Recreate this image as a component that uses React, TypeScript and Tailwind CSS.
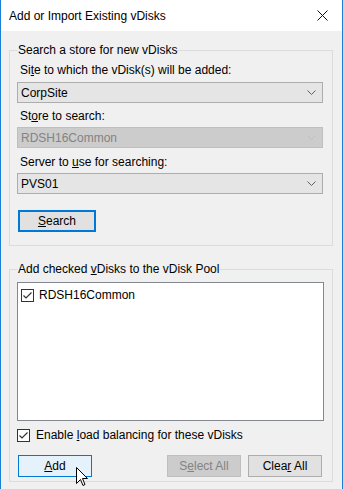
import { ReactNode } from 'react';

const font = { fontFamily: '"Liberation Sans", Arial, sans-serif' };

const Chevron = ({ disabled }: { disabled?: boolean }) => (
    <svg width="9" height="5" viewBox="0 0 9 5" className="shrink-0">
        <path d="M0.5 0.5 L4.5 4.5 L8.5 0.5" fill="none" stroke={disabled ? '#bfbfbf' : '#606060'} strokeWidth="1" />
    </svg>
);

const Combo = ({ value, disabled }: { value: string; disabled?: boolean }) => (
    <div
        className={`h-[21px] flex items-center justify-between pl-[3px] pr-[6px] border ${
            disabled ? 'bg-[#cccccc] border-[#bfbfbf] text-[#838383]' : 'bg-[#e5e5e5] border-[#adadad] text-black'
        }`}
    >
        <span>{value}</span>
        <Chevron disabled={disabled} />
    </div>
);

const CheckBox = () => (
    <div className="w-[13px] h-[13px] border border-[#333333] bg-white flex items-center justify-center shrink-0">
        <svg width="11" height="11" viewBox="0 0 11 11">
            <path d="M1.5 5.5 L4 8 L9.5 2.5" fill="none" stroke="#333333" strokeWidth="1.2" />
        </svg>
    </div>
);

const Btn = ({ children, kind, w }: { children: ReactNode; kind: 'normal' | 'focus' | 'hover' | 'disabled'; w: string }) => {
    const styles = {
        normal: 'bg-[#e1e1e1] border border-[#adadad] text-black',
        focus: 'bg-[#e1e1e1] border-2 border-[#0078d7] text-black',
        hover: 'bg-[#e5f1fb] border border-[#0078d7] text-black',
        disabled: 'bg-[#cccccc] border border-[#bfbfbf] text-[#838383]',
    };
    return <div className={`${w} h-[22px] flex items-center justify-center ${styles[kind]}`}>{children}</div>;
};

const Label = ({ children }: { children: ReactNode }) => <div className="h-4 pl-[3px]">{children}</div>;

export default function App() {
    return (
        <div className="w-[343px] h-[489px] bg-[#f0f0f0] border-x border-[#1c7fd6] text-[12px] leading-4 text-black relative overflow-hidden" style={font}>
            {/* title bar */}
            <div className="h-[31px] bg-white flex items-center justify-between pl-[8px] pr-[14px]">
                <span className="text-[12px]">Add or Import Existing vDisks</span>
                <svg width="11" height="11" viewBox="0 0 11 11">
                    <path d="M0.5 0.5 L10.5 10.5 M10.5 0.5 L0.5 10.5" stroke="#111" strokeWidth="1" />
                </svg>
            </div>

            <div className="pl-[8px] pr-[9px] pt-[11px]">
                <fieldset className="border border-[#dcdcdc] pl-[7px] pr-[9px] pt-[4px] pb-[13px]">
                    <legend className="px-[1px]">Search a store for new vDisks</legend>
                    <Label>Si<u>t</u>e to which the vDisk(s) will be added:</Label>
                    <div className="mt-[4px]">
                        <Combo value="CorpSite" />
                    </div>
                    <div className="mt-[5px]">
                        <Label>St<u>o</u>re to search:</Label>
                    </div>
                    <div className="mt-[3px]">
                        <Combo value="RDSH16Common" disabled />
                    </div>
                    <div className="mt-[6px]">
                        <Label>Server to <u>u</u>se for searching:</Label>
                    </div>
                    <div className="mt-[3px]">
                        <Combo value="PVS01" />
                    </div>
                    <div className="mt-[16px] pl-[1px]">
                        <Btn kind="focus" w="w-[78px]">
                            <span><u>S</u>earch</span>
                        </Btn>
                    </div>
                </fieldset>

                <fieldset className="mt-[15px] border border-[#dcdcdc] pl-[7px] pr-[8px] pt-[5px] pb-[4px]">
                    <legend className="px-[1px]">Add checked <u>v</u>Disks to the vDisk Pool</legend>
                    <div className="h-[139px] bg-white border border-[#828790] pt-[4px] pl-[3px]">
                        <div className="flex items-center gap-[5px]">
                            <CheckBox />
                            <span>RDSH16Common</span>
                        </div>
                    </div>
                    <div className="mt-[6px] flex items-center gap-[6px]">
                        <CheckBox />
                        <span>Enable <u>l</u>oad balancing for these vDisks</span>
                    </div>
                    <div className="mt-[12px] flex items-center pl-[1px] pr-[2px]">
                        <Btn kind="hover" w="w-[74px]">
                            <span><u>A</u>dd</span>
                        </Btn>
                        <div className="flex-1" />
                        <Btn kind="disabled" w="w-[74px]">
                            <span>S<u>e</u>lect All</span>
                        </Btn>
                        <div className="ml-[7px]">
                            <Btn kind="normal" w="w-[74px]">
                                <span>Clea<u>r</u> All</span>
                            </Btn>
                        </div>
                    </div>
                </fieldset>
            </div>

            {/* mouse pointer over Add */}
            <svg className="absolute left-[75px] top-[467px]" width="13" height="20" viewBox="0 0 13 20">
                <path
                    d="M0.5 0.5 L0.5 16.5 L4.5 12.5 L7 18.5 L9 17.5 L6.5 11.5 L11.5 11.5 Z"
                    fill="white"
                    stroke="black"
                    strokeWidth="1"
                    strokeLinejoin="miter"
                />
            </svg>
        </div>
    );
}
